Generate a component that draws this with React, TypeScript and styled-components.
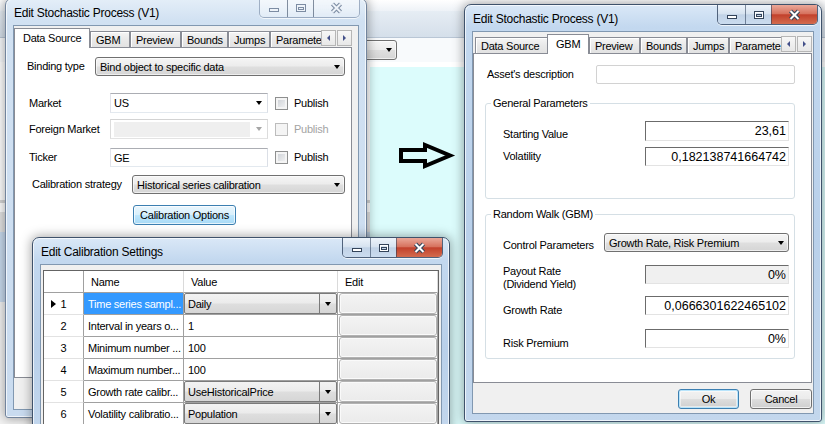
import type { FC, ReactNode } from "react";
import styled, { createGlobalStyle } from "styled-components";

const GlobalStyle = createGlobalStyle`
  html, body {
    margin: 0;
    padding: 0;
  }
  body {
    width: 825px;
    height: 424px;
    overflow: hidden;
    font-family: "Liberation Sans", Arial, sans-serif;
    font-size: 11px;
    letter-spacing: -0.25px;
    color: #000;
  }
  *, *::before, *::after {
    box-sizing: border-box;
  }
`;

const Desktop = styled.div`
  position: relative;
  width: 825px;
  height: 424px;
  overflow: hidden;
  background: #dcfcfc;
`;

/* ---------- application behind the dialogs ---------- */

const BackApp = styled.div`
  width: 100%;
  height: 100%;
  display: grid;
  grid-template-rows: 11px 27px 24px 1fr;
`;

const BackCaption = styled.div`
  background: linear-gradient(#ffffff, #eef2f7);
`;

const BackRibbon = styled.div`
  background: linear-gradient(#e6edf4, #d5dfea);
  border-bottom: 1px solid #b9c6d5;
`;

const BackComboRow = styled.div`
  display: flex;
  align-items: center;
  padding-left: 290px;
  background: #f8fafc;
`;

const BackBody = styled.div`
  display: grid;
  grid-template-columns: 370px 1fr;
`;

const BackSidebar = styled.div`
  background: linear-gradient(
    180deg,
    #ffffff 0 138px,
    #d6d6d6 138px 141px,
    #ffffff 141px 150px,
    #e4e4e4 150px 170px,
    #c9dbef 170px 240px,
    #f3f3f3 240px
  );
`;

const BackCanvas = styled.div`
  background: #dcfcfc;
  border-top: 5px solid #ffffff;
`;

const ArrowMark = styled.svg`
  position: absolute;
  left: 398px;
  top: 142px;
`;

/* ---------- window chrome ---------- */

const Frame = styled.div<{ $x: number; $y: number; $w: number; $h: number; $active: boolean }>`
  position: absolute;
  left: ${(p) => p.$x}px;
  top: ${(p) => p.$y}px;
  width: ${(p) => p.$w}px;
  height: ${(p) => p.$h}px;
  display: flex;
  flex-direction: column;
  padding: 0 7px 7px;
  border: 1px solid ${(p) => (p.$active ? "#3f526b" : "#72849c")};
  border-radius: 7px 7px 3px 3px;
  background: ${(p) =>
    p.$active
      ? "linear-gradient(180deg, #dae8f7 0px, #c3d8ef 22px, #b9d0ea 55%, #c3d7ed 100%)"
      : "linear-gradient(180deg, #e4eef8 0px, #d1e1f2 22px, #c9dbef 100%)"};
  box-shadow: inset 0 0 0 1px rgba(255, 255, 255, 0.7), 0 0 11px 1px rgba(0, 0, 0, 0.35);
`;

const TitleBar = styled.div`
  flex: none;
  height: 26px;
  display: flex;
  padding-left: 1px;
`;

const Title = styled.span`
  align-self: center;
  padding-top: 2px;
  font-size: 12px;
  white-space: nowrap;
`;

const Caption = styled.div<{ $active: boolean; $offset: number }>`
  margin-left: auto;
  margin-right: ${(p) => -p.$offset}px;
  display: flex;
  height: ${(p) => (p.$active ? 20 : 19)}px;
  border: 1px solid ${(p) => (p.$active ? "rgba(38, 56, 84, 0.75)" : "rgba(96, 116, 146, 0.5)")};
  border-top: none;
  border-radius: 0 0 5px 5px;
  overflow: hidden;
  box-shadow: 0 1px 0 rgba(255, 255, 255, 0.7);
`;

const CapButton = styled.div<{ $w: number; $close?: boolean; $active: boolean }>`
  width: ${(p) => p.$w}px;
  height: 100%;
  display: flex;
  align-items: center;
  justify-content: center;
  background: ${(p) =>
    !p.$active
      ? "linear-gradient(rgba(255,255,255,0.6), rgba(255,255,255,0.3))"
      : p.$close
        ? "linear-gradient(#eaa899 0%, #d7735f 45%, #c2412c 52%, #d36b4e 100%)"
        : "linear-gradient(#edf3fa 0%, #d7e3f0 45%, #c1d2e6 52%, #cbdcef 100%)"};

  & + & {
    border-left: 1px solid
      ${(p) => (p.$active ? "rgba(38, 56, 84, 0.55)" : "rgba(96, 116, 146, 0.4)")};
  }
`;

const Client = styled.div`
  flex: 1;
  min-height: 0;
  display: flex;
  flex-direction: column;
  background: #f0f0f0;
  border: 1px solid #8198b1;
`;

const glyphStroke = (active: boolean) => (active ? "#34445a" : "#7c8ca3");
const glyphFill = (active: boolean) => (active ? "#ffffff" : "#eef3f9");

const MinGlyph: FC<{ active: boolean }> = ({ active }) => (
  <svg width="12" height="10" viewBox="0 0 12 10">
    <rect x="1.5" y="5.5" width="9" height="3" fill={glyphFill(active)} stroke={glyphStroke(active)} />
  </svg>
);

const MaxGlyph: FC<{ active: boolean }> = ({ active }) => (
  <svg width="12" height="10" viewBox="0 0 12 10">
    <rect x="1.5" y="1.5" width="9" height="7" fill="none" stroke={glyphStroke(active)} />
    <rect x="2.5" y="2.5" width="7" height="5" fill="none" stroke={glyphFill(active)} />
    <rect x="3.5" y="4.5" width="5" height="2" fill="none" stroke={glyphStroke(active)} />
  </svg>
);

const CloseGlyph: FC<{ active: boolean }> = ({ active }) => (
  <svg width="15" height="12" viewBox="0 0 15 12">
    <path d="M3.5 2 L11.5 10 M11.5 2 L3.5 10" stroke={glyphStroke(active)} strokeWidth="4.2" />
    <path d="M3.5 2 L11.5 10 M11.5 2 L3.5 10" stroke={glyphFill(active)} strokeWidth="2" />
  </svg>
);

interface IWindowProps {
  title: string;
  x: number;
  y: number;
  width: number;
  height: number;
  active?: boolean;
  captionOffset?: number;
  children: ReactNode;
}

const Window: FC<IWindowProps> = ({
  title,
  x,
  y,
  width,
  height,
  active = false,
  captionOffset = 1,
  children,
}) => (
  <Frame $x={x} $y={y} $w={width} $h={height} $active={active}>
    <TitleBar>
      <Title>{title}</Title>
      <Caption $active={active} $offset={captionOffset}>
        <CapButton $w={27} $active={active}>
          <MinGlyph active={active} />
        </CapButton>
        <CapButton $w={26} $active={active}>
          <MaxGlyph active={active} />
        </CapButton>
        <CapButton $w={46} $active={active} $close>
          <CloseGlyph active={active} />
        </CapButton>
      </Caption>
    </TitleBar>
    <Client>{children}</Client>
  </Frame>
);

/* ---------- tab control ---------- */

const TABS = [
  { label: "Data Source", w: 74 },
  { label: "GBM", w: 40 },
  { label: "Preview", w: 51 },
  { label: "Bounds", w: 47 },
  { label: "Jumps", w: 42 },
  { label: "Paramete", w: 64 },
];

const TabControl = styled.div<{ $h: number; $mr: number }>`
  flex: none;
  height: ${(p) => p.$h}px;
  margin: 2px ${(p) => p.$mr}px 0 0;
  display: flex;
  flex-direction: column;
`;

const TabStrip = styled.div`
  flex: none;
  height: 19px;
  display: flex;
`;

const TabList = styled.div`
  flex: 1;
  min-width: 0;
  height: 20px;
  margin-bottom: -1px;
  padding-left: 2px;
  display: flex;
  align-items: flex-end;
  overflow: hidden;
  position: relative;
  z-index: 1;
`;

const Tab = styled.div<{ $w: number; $selected: boolean }>`
  flex: none;
  width: ${(p) => p.$w + (p.$selected ? 2 : 0)}px;
  height: ${(p) => (p.$selected ? 20 : 17)}px;
  margin-left: ${(p) => (p.$selected ? -2 : 0)}px;
  padding: ${(p) => (p.$selected ? "0 0 2px 8px" : "0 0 0 5px")};
  display: flex;
  align-items: center;
  white-space: nowrap;
  border: 1px solid #898c95;
  border-bottom: ${(p) => (p.$selected ? "none" : "1px solid #898c95")};
  background: ${(p) => (p.$selected ? "#ffffff" : "linear-gradient(#f5f5f5, #e9e9e9 50%, #e2e2e2)")};
  box-shadow: ${(p) => (p.$selected ? "none" : "inset 1px 1px 0 #ffffff")};
  position: relative;
  z-index: ${(p) => (p.$selected ? 2 : 0)};
`;

const ScrollPair = styled.div`
  flex: none;
  display: flex;
  gap: 1px;
  margin-top: 2px;
  height: 16px;
`;

const ScrollButton = styled.div`
  width: 15px;
  height: 16px;
  display: flex;
  align-items: center;
  justify-content: center;
  border: 1px solid #b6b6b6;
  background: linear-gradient(#f7f7f7, #e8e8e8);
`;

const ScrollTri = styled.span<{ $dir: "left" | "right" }>`
  width: 0;
  height: 0;
  border-top: 3px solid transparent;
  border-bottom: 3px solid transparent;
  ${(p) => (p.$dir === "left" ? "border-right: 3px solid #44518a;" : "border-left: 3px solid #44518a;")}
`;

const TabPanel = styled.div`
  flex: 1;
  min-height: 0;
  display: flex;
  flex-direction: column;
  background: #ffffff;
  border: 1px solid #898c95;
`;

const Tabs: FC<{ selected: number; height: number; marginRight: number; children: ReactNode }> = ({
  selected,
  height,
  marginRight,
  children,
}) => (
  <TabControl $h={height} $mr={marginRight}>
    <TabStrip>
      <TabList>
        {TABS.map((t, i) => (
          <Tab key={t.label} $w={t.w} $selected={i === selected}>
            {t.label}
          </Tab>
        ))}
      </TabList>
      <ScrollPair>
        <ScrollButton>
          <ScrollTri $dir="left" />
        </ScrollButton>
        <ScrollButton>
          <ScrollTri $dir="right" />
        </ScrollButton>
      </ScrollPair>
    </TabStrip>
    <TabPanel>{children}</TabPanel>
  </TabControl>
);

/* ---------- form controls ---------- */

const Row = styled.div<{ $mt: number; $h: number; $pl: number; $align?: string }>`
  flex: none;
  display: flex;
  align-items: ${(p) => p.$align ?? "center"};
  height: ${(p) => p.$h}px;
  margin-top: ${(p) => p.$mt}px;
  padding-left: ${(p) => p.$pl}px;
`;

const Label = styled.span<{ $w?: number; $self?: string; $disabled?: boolean }>`
  flex: none;
  width: ${(p) => (p.$w ? `${p.$w}px` : "auto")};
  align-self: ${(p) => p.$self ?? "auto"};
  line-height: 13px;
  white-space: nowrap;
  color: ${(p) => (p.$disabled ? "#a3a3a3" : "#000")};
`;

const Caret = styled.span<{ $disabled?: boolean }>`
  flex: none;
  width: 0;
  height: 0;
  border-left: 3.5px solid transparent;
  border-right: 3.5px solid transparent;
  border-top: 4px solid ${(p) => (p.$disabled ? "#a6a6a6" : "#000")};
`;

const ComboText = styled.span`
  flex: 1;
  min-width: 0;
  overflow: hidden;
  white-space: nowrap;
`;

const DropList = styled.div<{ $w: number }>`
  flex: none;
  width: ${(p) => p.$w}px;
  height: 100%;
  display: flex;
  align-items: center;
  padding: 0 4px 0 4px;
  border: 1px solid #707070;
  border-radius: 3px;
  background: linear-gradient(#f5f5f5 0%, #ececec 48%, #dfdfdf 52%, #d5d5d5 100%);
  box-shadow: inset 0 0 0 1px rgba(255, 255, 255, 0.6);
`;

const BackCombo = styled(DropList)`
  height: 20px;
`;

const EditBox = styled.div<{ $w: number; $disabled?: boolean }>`
  flex: none;
  width: ${(p) => p.$w}px;
  height: 100%;
  display: flex;
  align-items: center;
  padding: 0 5px 0 3px;
  background: #ffffff;
  border: 1px solid;
  border-color: ${(p) =>
    p.$disabled ? "#d3d3d3 #dcdcdc #e3e3e3 #dcdcdc" : "#abadb3 #dbdfe6 #e3e9ef #e2e3ea"};
`;

const DisabledFill = styled.span`
  flex: none;
  width: 136px;
  height: 15px;
  margin-right: auto;
  background: #efefef;
`;

const CheckBox = styled.span<{ $disabled?: boolean; $ml: number }>`
  flex: none;
  width: 13px;
  height: 13px;
  margin: 0 6px 0 ${(p) => p.$ml}px;
  border: 1px solid ${(p) => (p.$disabled ? "#bcbcbc" : "#8e8f8f")};
  background: ${(p) => (p.$disabled ? "#f4f4f4" : "linear-gradient(135deg, #c9cdd3, #f6f6f6)")};
  box-shadow: inset 0 0 0 2px #f4f4f4;
`;

const PushButton = styled.div<{ $w: number; $h: number; $variant?: "normal" | "default" | "hot" }>`
  flex: none;
  width: ${(p) => p.$w}px;
  height: ${(p) => p.$h}px;
  display: flex;
  align-items: center;
  justify-content: center;
  border-radius: 3px;
  border: 1px solid ${(p) => (p.$variant === "normal" || !p.$variant ? "#707070" : "#3c7fb1")};
  background: ${(p) =>
    p.$variant === "hot"
      ? "linear-gradient(#eaf6fd 0%, #d9f0fc 48%, #bee6fd 52%, #a7d9f5 100%)"
      : "linear-gradient(#f2f2f2 0%, #ebebeb 48%, #dddddd 52%, #cfcfcf 100%)"};
  box-shadow: ${(p) =>
    p.$variant === "default"
      ? "inset 0 0 0 1px #b8e4fb, inset 0 0 0 2px rgba(255,255,255,0.5)"
      : "inset 0 0 0 1px rgba(255,255,255,0.7)"};
`;

const FlatBox = styled.div<{ $w: number }>`
  flex: none;
  width: ${(p) => p.$w}px;
  height: 100%;
  background: #ffffff;
  border: 1px solid #d2d2d2;
  border-radius: 2px;
`;

const NumBox = styled.div<{ $w: number; $h: number; $disabled?: boolean; $self?: string }>`
  flex: none;
  width: ${(p) => p.$w}px;
  height: ${(p) => p.$h}px;
  align-self: ${(p) => p.$self ?? "auto"};
  display: flex;
  align-items: center;
  justify-content: flex-end;
  padding-right: 2px;
  font-size: 12.5px;
  letter-spacing: 0;
  background: ${(p) => (p.$disabled ? "#f0f0f0" : "#ffffff")};
  border-top: 1px solid #6b6b6b;
  border-left: 1px solid #6b6b6b;
  border-right: 1px solid #e3e3e3;
  border-bottom: 1px solid #e3e3e3;
`;

const Group = styled.fieldset<{ $mt: number; $h: number }>`
  flex: none;
  width: 310px;
  height: ${(p) => p.$h}px;
  margin: ${(p) => p.$mt}px 0 0 11px;
  padding: 0;
  min-width: 0;
  border: 1px solid #d5dfe5;
  border-radius: 3px;
  display: flex;
  flex-direction: column;
`;

const GroupTitle = styled.legend`
  margin-left: 5px;
  padding: 0 2px;
  line-height: 13px;
`;

const ButtonBar = styled.div`
  flex: none;
  display: flex;
  justify-content: flex-end;
  gap: 11px;
  padding: 6px 1px 0 0;
`;

/* ---------- calibration grid ---------- */

const Grid = styled.div`
  flex: none;
  margin: 5px 2px 0 2px;
  border: 1px solid #646464;
  background: #ffffff;
  display: grid;
  grid-template-columns: 40px 100px 154px 100px;
  grid-auto-rows: 22px;
`;

const HeadCell = styled.div<{ $corner?: boolean }>`
  display: flex;
  align-items: center;
  padding-left: 7px;
  border-right: 1px solid ${(p) => (p.$corner ? "#a0a0a0" : "#dadada")};
  border-bottom: 1px solid #a0a0a0;
  background: #ffffff;
`;

const RowHead = styled.div`
  display: grid;
  grid-template-columns: 12px 1fr 12px;
  align-items: center;
  border-right: 1px solid #a0a0a0;
  border-bottom: 1px solid #e2e2e2;
  background: #ffffff;
`;

const RowMarker = styled.span`
  justify-self: end;
  width: 0;
  height: 0;
  border-top: 4.5px solid transparent;
  border-bottom: 4.5px solid transparent;
  border-left: 5px solid #000;
`;

const RowNum = styled.span`
  grid-column: 2;
  text-align: center;
`;

const DataCell = styled.div<{ $selected?: boolean; $pad?: number }>`
  display: flex;
  align-items: center;
  padding-left: ${(p) => p.$pad ?? 4}px;
  white-space: nowrap;
  overflow: hidden;
  border-right: 1px solid #a0a0a0;
  border-bottom: 1px solid #a0a0a0;
  background: ${(p) => (p.$selected ? "#3399ff" : "#ffffff")};
  color: ${(p) => (p.$selected ? "#ffffff" : "#000")};
`;

const CellCombo = styled.div`
  width: 100%;
  height: 100%;
  display: flex;
  align-items: center;
  padding-left: 3px;
  border: 1px solid #7a7a7a;
  border-radius: 2px;
  background: linear-gradient(#f3f3f3 0%, #ebebeb 48%, #dedede 52%, #d6d6d6 100%);
`;

const CellDrop = styled.span`
  flex: none;
  width: 17px;
  height: 100%;
  display: flex;
  align-items: center;
  justify-content: center;
  border-left: 1px solid #7a7a7a;
`;

const EditButton = styled.div`
  width: 100%;
  height: 100%;
  border: 1px solid #b2b2b2;
  border-radius: 3px;
  background: linear-gradient(#f3f3f3, #ebebeb);
  box-shadow: inset 0 0 0 1px #fafafa;
`;

const CALIB_ROWS = [
  { n: 1, name: "Time series sampl...", value: "Daily", combo: true, current: true },
  { n: 2, name: "Interval in years o...", value: "1" },
  { n: 3, name: "Minimum number ...", value: "100" },
  { n: 4, name: "Maximum number...", value: "100" },
  { n: 5, name: "Growth rate calibr...", value: "UseHistoricalPrice", combo: true },
  { n: 6, name: "Volatility calibratio...", value: "Population", combo: true },
];

const CalibrationRow: FC<{ n: number; name: string; value: string; combo?: boolean; current?: boolean }> = ({
  n,
  name,
  value,
  combo,
  current,
}) => (
  <>
    <RowHead>
      {current ? <RowMarker /> : <span />}
      <RowNum>{n}</RowNum>
    </RowHead>
    <DataCell $selected={current}>{name}</DataCell>
    {combo ? (
      <DataCell $pad={0}>
        <CellCombo>
          <ComboText>{value}</ComboText>
          <CellDrop>
            <Caret />
          </CellDrop>
        </CellCombo>
      </DataCell>
    ) : (
      <DataCell>{value}</DataCell>
    )}
    <DataCell $pad={1}>
      <EditButton />
    </DataCell>
  </>
);

const CalibrationGrid: FC = () => (
  <Grid>
    <HeadCell $corner />
    <HeadCell>Name</HeadCell>
    <HeadCell>Value</HeadCell>
    <HeadCell>Edit</HeadCell>
    {CALIB_ROWS.map((r) => (
      <CalibrationRow key={r.n} {...r} />
    ))}
  </Grid>
);

/* ---------- page ---------- */

const App: FC = () => (
  <>
    <GlobalStyle />
    <Desktop>
      <BackApp>
        <BackCaption />
        <BackRibbon />
        <BackComboRow>
          <BackCombo $w={107}>
            <ComboText />
            <Caret />
          </BackCombo>
        </BackComboRow>
        <BackBody>
          <BackSidebar />
          <BackCanvas />
        </BackBody>
      </BackApp>

      <ArrowMark width="58" height="30" viewBox="398 142 58 30">
        <path
          d="M401 150 L425 150 L425 145 L450 155.5 L425 166 L425 161 L401 161 Z"
          fill="none"
          stroke="#000"
          strokeWidth="4"
        />
      </ArrowMark>

      <Window title="Edit Stochastic Process (V1)" x={5} y={-2} width={362} height={420}>
        <Tabs selected={0} height={350} marginRight={6}>
          <Row $mt={9} $h={19} $pl={12}>
            <Label $w={68}>Binding type</Label>
            <DropList $w={250}>
              <ComboText>Bind object to specific data</ComboText>
              <Caret />
            </DropList>
          </Row>
          <Row $mt={17} $h={20} $pl={14}>
            <Label $w={81}>Market</Label>
            <EditBox $w={158}>
              <ComboText>US</ComboText>
              <Caret />
            </EditBox>
            <CheckBox $ml={7} />
            <Label>Publish</Label>
          </Row>
          <Row $mt={6} $h={20} $pl={14}>
            <Label $w={81}>Foreign Market</Label>
            <EditBox $w={158} $disabled>
              <DisabledFill />
              <Caret $disabled />
            </EditBox>
            <CheckBox $ml={7} $disabled />
            <Label $disabled>Publish</Label>
          </Row>
          <Row $mt={9} $h={19} $pl={14}>
            <Label $w={81}>Ticker</Label>
            <EditBox $w={158}>GE</EditBox>
            <CheckBox $ml={7} />
            <Label>Publish</Label>
          </Row>
          <Row $mt={8} $h={19} $pl={17}>
            <Label $w={100}>Calibration strategy</Label>
            <DropList $w={213}>
              <ComboText>Historical series calibration</ComboText>
              <Caret />
            </DropList>
          </Row>
          <Row $mt={11} $h={20} $pl={118}>
            <PushButton $w={103} $h={20} $variant="hot">
              Calibration Options
            </PushButton>
          </Row>
        </Tabs>
      </Window>

      <Window title="Edit Calibration Settings" x={32} y={237} width={418} height={200} active>
        <CalibrationGrid />
      </Window>

      <Window
        title="Edit Stochastic Process (V1)"
        x={464}
        y={4}
        width={358}
        height={418}
        active
        captionOffset={4}
      >
        <Tabs selected={1} height={349} marginRight={1}>
          <Row $mt={11} $h={19} $pl={13}>
            <Label $w={109}>Asset's description</Label>
            <FlatBox $w={199} />
          </Row>

          <Group $mt={13} $h={102}>
            <GroupTitle>General Parameters</GroupTitle>
            <Row $mt={11} $h={20} $pl={17}>
              <Label $w={142} $self="flex-end">
                Starting Value
              </Label>
              <NumBox $w={144} $h={20}>
                23,61
              </NumBox>
            </Row>
            <Row $mt={6} $h={19} $pl={17}>
              <Label $w={142}>Volatility</Label>
              <NumBox $w={144} $h={19}>
                0,182138741664742
              </NumBox>
            </Row>
          </Group>

          <Group $mt={9} $h={151}>
            <GroupTitle>Random Walk (GBM)</GroupTitle>
            <Row $mt={12} $h={19} $pl={17}>
              <Label $w={101} $self="flex-end">
                Control Parameters
              </Label>
              <DropList $w={185}>
                <ComboText>Growth Rate, Risk Premium</ComboText>
                <Caret />
              </DropList>
            </Row>
            <Row $mt={13} $h={26} $pl={17} $align="flex-start">
              <Label $w={142}>
                Payout Rate
                <br />
                (Dividend Yield)
              </Label>
              <NumBox $w={144} $h={19} $disabled>
                0%
              </NumBox>
            </Row>
            <Row $mt={5} $h={21} $pl={17} $align="flex-start">
              <Label $w={142} $self="flex-end">
                Growth Rate
              </Label>
              <NumBox $w={144} $h={19}>
                0,0666301622465102
              </NumBox>
            </Row>
            <Row $mt={12} $h={21} $pl={17} $align="flex-start">
              <Label $w={142} $self="flex-end">
                Risk Premium
              </Label>
              <NumBox $w={144} $h={19}>
                0%
              </NumBox>
            </Row>
          </Group>
        </Tabs>
        <ButtonBar>
          <PushButton $w={61} $h={20} $variant="default">
            Ok
          </PushButton>
          <PushButton $w={62} $h={20}>
            Cancel
          </PushButton>
        </ButtonBar>
      </Window>
    </Desktop>
  </>
);

export default App;
